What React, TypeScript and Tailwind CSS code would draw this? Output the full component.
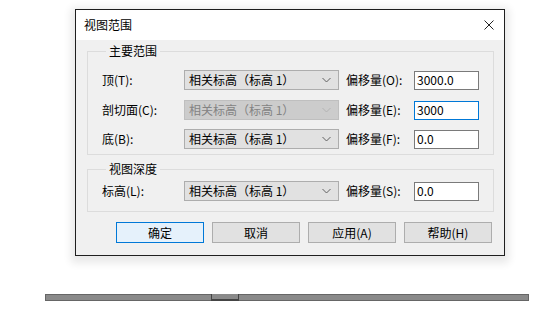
import { ReactNode } from "react";

const font = "font-['Noto_Sans_CJK_SC','Noto_Sans',sans-serif]";

const Chevron = ({ disabled }: { disabled?: boolean }) => (
  <svg width="9" height="6" viewBox="0 0 9 6" className="shrink-0">
    <path
      d="M0.5 1 L4.5 5 L8.5 1"
      fill="none"
      stroke={disabled ? "#b3b3b3" : "#606060"}
      strokeWidth="1"
    />
  </svg>
);

const Combo = ({ disabled }: { disabled?: boolean }) => (
  <div
    className={
      disabled
        ? "flex h-[20px] w-[155px] items-center justify-between border border-[#bfbfbf] bg-[#cccccc] pl-[4px] pr-[7px] text-[#838383]"
        : "flex h-[20px] w-[155px] items-center justify-between border border-[#adadad] bg-[#e1e1e1] pl-[4px] pr-[7px] text-black"
    }
  >
    <span className="leading-none">相关标高（标高 1）</span>
    <Chevron disabled={disabled} />
  </div>
);

const Input = ({ value, focused }: { value: string; focused?: boolean }) => (
  <div
    className={
      focused
        ? "flex h-[19px] w-[65px] items-center border border-[#0078d7] bg-white pl-[2px] leading-none"
        : "flex h-[19px] w-[65px] items-center border border-[#7a7a7a] bg-white pl-[2px] leading-none"
    }
  >
    {value}
  </div>
);

const Row = ({
  label,
  offset,
  value,
  disabled,
  focused,
  className = "",
}: {
  label: string;
  offset: string;
  value: string;
  disabled?: boolean;
  focused?: boolean;
  className?: string;
}) => (
  <div className={`flex h-[20px] items-center ${className}`}>
    <span className="w-[82px] leading-none">{label}</span>
    <Combo disabled={disabled} />
    <span className="ml-[7px] w-[68px] leading-none">{offset}</span>
    <Input value={value} focused={focused} />
  </div>
);

const Group = ({
  title,
  children,
  className = "",
}: {
  title: string;
  children: ReactNode;
  className?: string;
}) => (
  <fieldset
    className={`ml-[11px] mr-[10px] border border-[#dcdcdc] pl-[14px] ${className}`}
  >
    <legend className="ml-[4px] px-[3px] text-[12px] leading-[14px]">
      {title}
    </legend>
    {children}
  </fieldset>
);

const Button = ({ label, primary }: { label: string; primary?: boolean }) => (
  <div
    className={
      primary
        ? "flex h-[21px] w-[88px] items-center justify-center border border-[#0078d7] bg-[#e5f1fb] leading-none"
        : "flex h-[21px] w-[88px] items-center justify-center border border-[#adadad] bg-[#e1e1e1] leading-none"
    }
  >
    {label}
  </div>
);

export default function App() {
  return (
    <div
      className={`flex h-[313px] w-[552px] flex-col bg-white text-[12px] text-black ${font}`}
    >
      <div className="ml-[75px] mt-[9px] flex h-[247px] w-[430px] flex-col border border-[#1f1f1f] shadow-[0_3px_8px_4px_rgba(0,0,0,0.09)]">
        <div className="flex h-[30px] items-center justify-between bg-white pl-[8px] pr-[10px]">
          <span className="leading-none">视图范围</span>
          <svg width="10" height="10" viewBox="0 0 10 10">
            <path d="M0.5 0.5 L9.5 9.5 M9.5 0.5 L0.5 9.5" stroke="#222" strokeWidth="1" />
          </svg>
        </div>
        <div className="flex flex-1 flex-col bg-[#f0f0f0]">
          <Group title="主要范围" className="mt-[4px] pb-[5px]">
            <Row label="顶(T):" offset="偏移量(O):" value="3000.0" className="mt-[12px]" />
            <Row
              label="剖切面(C):"
              offset="偏移量(E):"
              value="3000"
              disabled
              focused
              className="mt-[10px]"
            />
            <Row label="底(B):" offset="偏移量(F):" value="0.0" className="mt-[9px]" />
          </Group>
          <Group title="视图深度" className="mt-[7px] pb-[10px]">
            <Row label="标高(L):" offset="偏移量(S):" value="0.0" className="mt-[5px]" />
          </Group>
          <div className="ml-[40px] mt-[10px] flex gap-[8px]">
            <Button label="确定" primary />
            <Button label="取消" />
            <Button label="应用(A)" />
            <Button label="帮助(H)" />
          </div>
        </div>
      </div>
      <div className="ml-[45px] mt-[38px] flex h-[7px] w-[484px] border border-[#666666] bg-[#8a8a8a]">
        <div className="ml-[165px] h-[7px] w-[28px] -mt-[1px] border-x border-b-2 border-[#444444] bg-[#8a8a8a]" />
      </div>
    </div>
  );
}
